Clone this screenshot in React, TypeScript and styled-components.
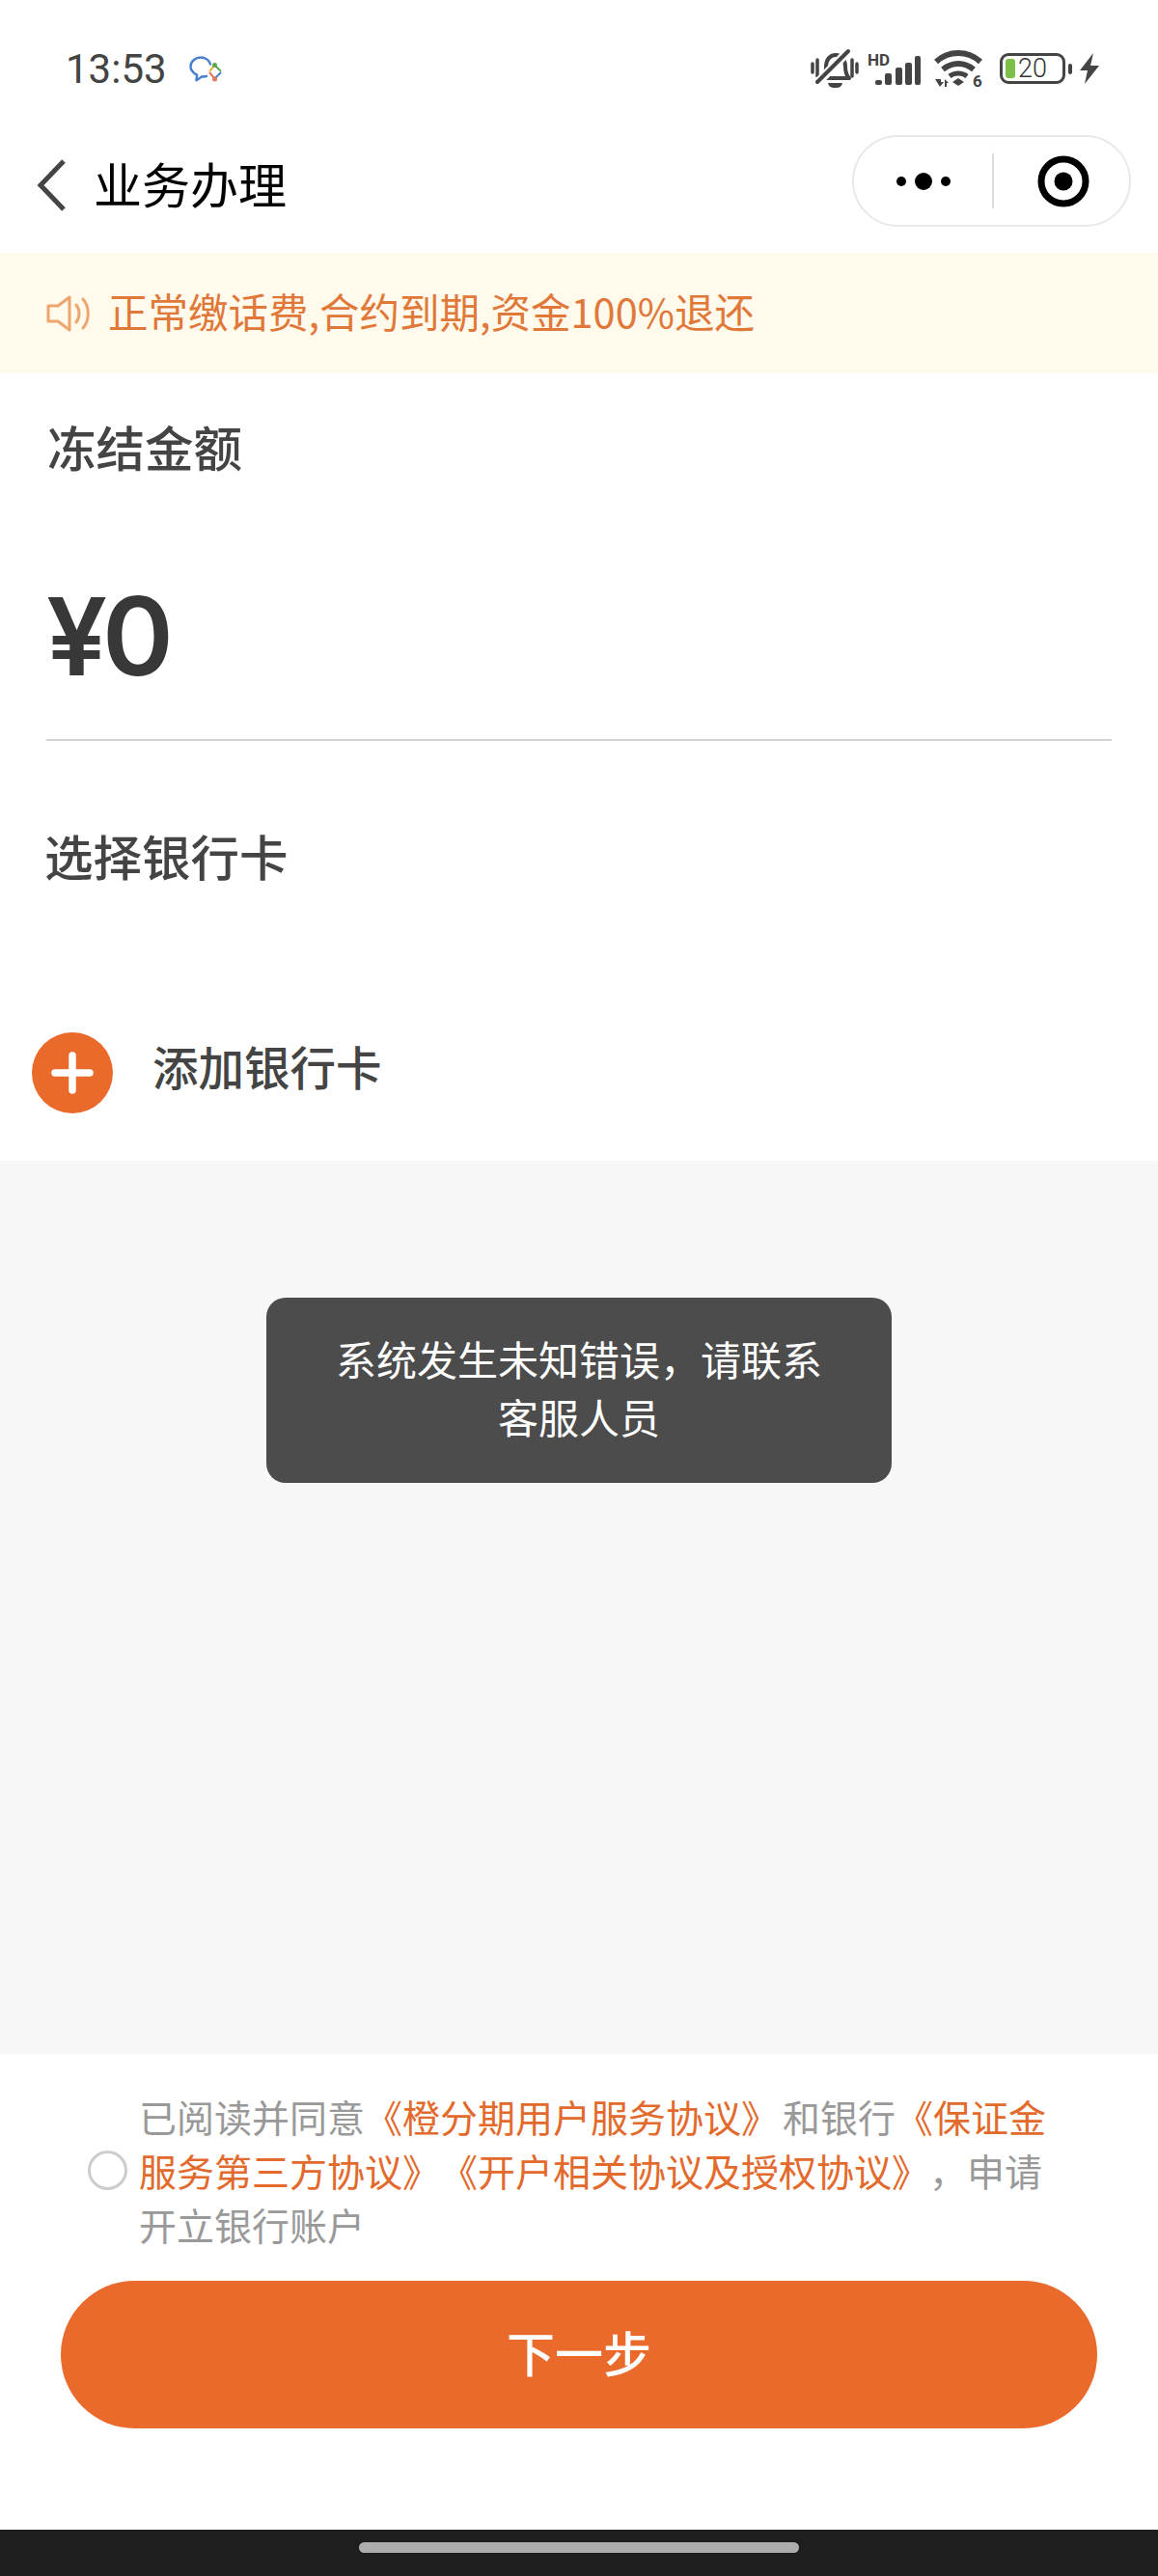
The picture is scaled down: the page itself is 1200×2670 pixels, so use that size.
import styled, { createGlobalStyle } from 'styled-components';

const CJK = `"Noto Sans CJK SC", "Noto Sans", sans-serif`;

const GlobalStyle = createGlobalStyle`
  html, body {
    margin: 0;
    padding: 0;
    background: #fff;
  }
  * {
    box-sizing: border-box;
  }
`;

const Page = styled.div`
  position: relative;
  width: 1200px;
  height: 2670px;
  display: flex;
  flex-direction: column;
  font-family: ${CJK};
  text-spacing-trim: space-all;
  overflow: hidden;
`;

const StatusBar = styled.div`
  height: 124px;
  padding: 50px 60px 0 68px;
  display: flex;
  align-items: flex-start;
  justify-content: space-between;
`;

const StatusLeft = styled.div`
  display: flex;
  align-items: center;
  gap: 23px;
  height: 44px;
`;

const Time = styled.span`
  font-family: Roboto, sans-serif;
  font-size: 42px;
  line-height: 44px;
  font-weight: 400;
  color: #444;
`;

const StatusRight = styled.div`
  display: flex;
  align-items: center;
  height: 42px;
`;

const BatteryWrap = styled.div`
  display: flex;
  align-items: center;
  margin-left: 16px;
`;

const Battery = styled.div`
  width: 68px;
  height: 32px;
  border: 3.5px solid #444;
  border-radius: 9px;
  padding: 3px;
  display: flex;
  align-items: center;
  gap: 3px;
`;

const BatteryFill = styled.div`
  width: 10px;
  height: 100%;
  border-radius: 3px;
  background: #7cc04a;
`;

const BatteryText = styled.span`
  font-family: Roboto, sans-serif;
  font-size: 27px;
  line-height: 25px;
  font-weight: 300;
  color: #333;
`;

const BatteryNub = styled.div`
  width: 4px;
  height: 11px;
  margin-left: 3px;
  border-radius: 2px;
  background: #444;
`;

const NavBar = styled.div`
  height: 138px;
  padding: 0 28px 0 38px;
  display: flex;
  align-items: flex-start;
  justify-content: space-between;
`;

const NavLeft = styled.div`
  display: flex;
  align-items: center;
  height: 136px;
`;

const Title = styled.h1`
  margin: -6px 0 0 27px;
  font-size: 50px;
  line-height: 60px;
  font-weight: 400;
  color: #000;
`;

const Capsule = styled.div`
  margin-top: 16px;
  width: 289px;
  height: 95px;
  border: 2px solid #e8e8e8;
  border-radius: 48px;
  display: flex;
  align-items: center;
`;

const CapsuleCell = styled.div<{ $width: number; $shift?: number }>`
  width: ${(p) => p.$width}px;
  padding-left: ${(p) => p.$shift ?? 0}px;
  display: flex;
  align-items: center;
  justify-content: center;
`;

const CapsuleDivider = styled.div`
  width: 2px;
  height: 57px;
  background: #dcdcdc;
`;

const Notice = styled.div`
  height: 125px;
  padding: 0 0 0 48px;
  display: flex;
  align-items: center;
  gap: 15px;
  background: #fffaeb;
`;

const NoticeText = styled.span`
  margin-top: -6px;
  font-size: 41.5px;
  line-height: 48px;
  font-weight: 400;
  color: #e0783a;
`;

const Form = styled.section`
  height: 816px;
  background: #fff;
  display: flex;
  flex-direction: column;
`;

const SectionLabel = styled.div<{ $left: number; $top: number }>`
  margin: ${(p) => p.$top}px 0 0 ${(p) => p.$left}px;
  font-size: 50.5px;
  line-height: 60px;
  font-weight: 500;
  color: #444;
`;

const Amount = styled.div`
  margin: 103px 48px 0;
  height: 173px;
  border-bottom: 2px solid #d2d2d2;
  font-family: Inter, ${CJK};
  font-size: 112px;
  line-height: 128px;
  letter-spacing: -5px;
  font-weight: 600;
  color: #383838;
`;

const AddRow = styled.div`
  margin: 154px 0 0 33px;
  display: flex;
  align-items: center;
  gap: 41px;
`;

const AddIcon = styled.div`
  width: 84px;
  height: 84px;
  border-radius: 50%;
  background: #ea6a2c;
  display: flex;
  align-items: center;
  justify-content: center;
`;

const AddText = styled.span`
  margin-top: -14px;
  font-size: 47.5px;
  line-height: 60px;
  font-weight: 500;
  color: #444;
`;

const Blank = styled.div`
  flex: 1;
  background: #f7f7f7;
`;

const Toast = styled.div`
  position: absolute;
  top: 1345px;
  left: 276px;
  width: 648px;
  height: 192px;
  padding: 33px 70px 0;
  border-radius: 20px;
  background: #4c4c4c;
  color: #fff;
  font-size: 42px;
  line-height: 60px;
  text-align: center;
`;

const Footer = styled.footer`
  height: 493px;
  background: #fff;
  padding-top: 36px;
  display: flex;
  flex-direction: column;
`;

const Agreement = styled.div`
  display: flex;
  align-items: center;
  padding-left: 91px;
  gap: 12px;
`;

const Radio = styled.div`
  flex: none;
  width: 41px;
  height: 41px;
  border: 3px solid #ccc;
  border-radius: 50%;
`;

const AgreementText = styled.p`
  margin: 0;
  width: 950px;
  font-size: 39px;
  line-height: 56px;
  color: #999;
`;

const Link = styled.span<{ $after?: number }>`
  margin-right: ${(p) => p.$after ?? 0}px;
  color: #e26a2c;
`;

const NextButton = styled.button`
  margin: 31px 63px 0;
  height: 153px;
  padding: 0 0 8px;
  border: 0;
  border-radius: 77px;
  background: #ea6a2c;
  color: #fff;
  font-family: ${CJK};
  font-size: 50px;
  font-weight: 500;
`;

const HomeBar = styled.div`
  height: 48px;
  background: #1e1e1e;
  display: flex;
  align-items: center;
  justify-content: center;
`;

const HomePill = styled.div`
  width: 456px;
  height: 11px;
  margin-top: -11px;
  border-radius: 6px;
  background: #adadad;
`;

const ChatIcon = () => (
  <svg width="35" height="28" viewBox="0 0 35 28" fill="none">
    <path
      d="M18 21c-1.500.4-3 .5-4.500.3l-6 4 .6-5.600C4 17.500 1.500 14.500 1.500 11 1.500 5.800 6.400 1.500 12 1.500c4.800 0 8.800 2.900 10 7"
      stroke="#4a80d0"
      strokeWidth="2.500"
      strokeLinecap="round"
      strokeLinejoin="round"
    />
    <path d="M26 10l-5 6" stroke="#eab43c" strokeWidth="2" />
    <path d="M27 10l6 6" stroke="#5da84e" strokeWidth="2" />
    <path d="M21 17l5 6" stroke="#e07a5a" strokeWidth="2" />
    <path d="M33 17l-6 6" stroke="#4a80d0" strokeWidth="2" />
    <circle cx="26.500" cy="9.500" r="2.500" fill="#5da84e" />
    <circle cx="26.500" cy="24" r="2.500" fill="#e07a5a" />
  </svg>
);

const MuteIcon = () => (
  <svg width="50" height="42" viewBox="0 0 50 42" fill="none">
    <path d="M2 16v9M7 12v17M43 12v17M48 16v9" stroke="#444" strokeWidth="3.500" strokeLinecap="round" />
    <path
      d="M12 31c4-3 4-8 4-12 0-7 4-12 10-12 6 0 10 5 10 12 0 5 1 9 4 12z"
      stroke="#444"
      strokeWidth="4"
      strokeLinejoin="round"
    />
    <path d="M18 36h15c-1 4-3 5-7.500 5S19 40 18 36z" fill="#444" />
    <path d="M7 36L39 3" stroke="#fff" strokeWidth="9" />
    <path d="M7 35L39 3" stroke="#444" strokeWidth="4" strokeLinecap="round" />
  </svg>
);

const SignalIcon = () => (
  <svg width="56" height="40" viewBox="0 -4 56 40" style={{ marginLeft: 9 }}>
    <text x="0" y="13" fontFamily="Roboto, sans-serif" fontWeight="700" fontSize="17" fill="#444">
      HD
    </text>
    <rect x="8" y="28" width="7" height="5" rx="2" fill="#444" />
    <rect x="18" y="21" width="7" height="12" rx="2" fill="#444" />
    <rect x="29" y="15" width="7" height="18" rx="2" fill="#444" />
    <rect x="39" y="10" width="7" height="23" rx="2" fill="#444" />
    <rect x="49" y="3" width="6" height="30" rx="2" fill="#444" />
  </svg>
);

const WifiIcon = () => (
  <svg width="52" height="48" viewBox="0 0 52 48" fill="none" style={{ marginLeft: 13, marginTop: 8 }}>
    <path d="M2 13C15 1 35 1 48 13" stroke="#444" strokeWidth="6" />
    <path d="M9 21c10-8 22-8 32 0" stroke="#444" strokeWidth="6" />
    <path d="M16 28c5-4 13-4 18 0" stroke="#444" strokeWidth="5" />
    <path d="M19 34l6-4 6 4-6 4z" fill="#444" />
    <path d="M1 31h6v3h3l-4 5zM11 39v-8l4 4h-2v4z" fill="#444" />
    <text x="40" y="39" fontFamily="Roboto, sans-serif" fontWeight="700" fontSize="17" fill="#444">
      6
    </text>
  </svg>
);

const BoltIcon = () => (
  <svg width="21" height="32" viewBox="0 0 21 32" style={{ marginLeft: 8 }}>
    <path d="M14 0L0 18h8L5 32 20 13h-9z" fill="#444" />
  </svg>
);

const BackIcon = () => (
  <svg width="32" height="56" viewBox="0 0 32 56" fill="none">
    <path d="M28 3L4 28l24 25" stroke="#444" strokeWidth="5" />
  </svg>
);

const MoreIcon = () => (
  <svg width="60" height="20" viewBox="0 0 60 20">
    <circle cx="7" cy="10" r="5" fill="#000" />
    <circle cx="30" cy="10" r="9" fill="#000" />
    <circle cx="53" cy="10" r="5" fill="#000" />
  </svg>
);

const TargetIcon = () => (
  <svg width="54" height="54" viewBox="0 0 54 54" fill="none">
    <circle cx="27" cy="27" r="23" stroke="#000" strokeWidth="7" />
    <circle cx="27" cy="27" r="9.500" fill="#000" />
  </svg>
);

const SpeakerIcon = () => (
  <svg width="49" height="38" viewBox="0 0 49 38" fill="none">
    <path
      d="M2 11h10L24 2v34L12 27H2z"
      stroke="#eea66e"
      strokeWidth="3"
      strokeLinejoin="round"
    />
    <path d="M31 10c4 5 4 13 0 18" stroke="#eea66e" strokeWidth="3" strokeLinecap="round" />
    <path d="M38 4c7 8 7 22 0 30" stroke="#eea66e" strokeWidth="3" strokeLinecap="round" />
  </svg>
);

const PlusIcon = () => (
  <svg width="44" height="44" viewBox="0 0 44 44">
    <path d="M22 4v36M4 22h36" stroke="#fff" strokeWidth="7.500" strokeLinecap="round" />
  </svg>
);

export default function App() {
  return (
    <Page>
      <GlobalStyle />
      <StatusBar>
        <StatusLeft>
          <Time>13:53</Time>
          <ChatIcon />
        </StatusLeft>
        <StatusRight>
          <MuteIcon />
          <SignalIcon />
          <WifiIcon />
          <BatteryWrap>
            <Battery>
              <BatteryFill />
              <BatteryText>20</BatteryText>
            </Battery>
            <BatteryNub />
          </BatteryWrap>
          <BoltIcon />
        </StatusRight>
      </StatusBar>

      <NavBar>
        <NavLeft>
          <BackIcon />
          <Title>业务办理</Title>
        </NavLeft>
        <Capsule>
          <CapsuleCell $width={143}>
            <MoreIcon />
          </CapsuleCell>
          <CapsuleDivider />
          <CapsuleCell $width={140} $shift={4}>
            <TargetIcon />
          </CapsuleCell>
        </Capsule>
      </NavBar>

      <Notice>
        <SpeakerIcon />
        <NoticeText>正常缴话费,合约到期,资金100%退还</NoticeText>
      </Notice>

      <Form>
        <SectionLabel $left={49} $top={45}>
          冻结金额
        </SectionLabel>
        <Amount>¥0</Amount>
        <SectionLabel $left={46} $top={88}>
          选择银行卡
        </SectionLabel>
        <AddRow>
          <AddIcon>
            <PlusIcon />
          </AddIcon>
          <AddText>添加银行卡</AddText>
        </AddRow>
      </Form>

      <Blank />

      <Toast>系统发生未知错误，请联系客服人员</Toast>

      <Footer>
        <Agreement>
          <Radio />
          <AgreementText>
            已阅读并同意<Link $after={4}>《橙分期用户服务协议》</Link>和银行
            <Link>《保证金服务第三方协议》《开户相关协议及授权协议》</Link>，申请开立银行账户
          </AgreementText>
        </Agreement>
        <NextButton>下一步</NextButton>
      </Footer>

      <HomeBar>
        <HomePill />
      </HomeBar>
    </Page>
  );
}
